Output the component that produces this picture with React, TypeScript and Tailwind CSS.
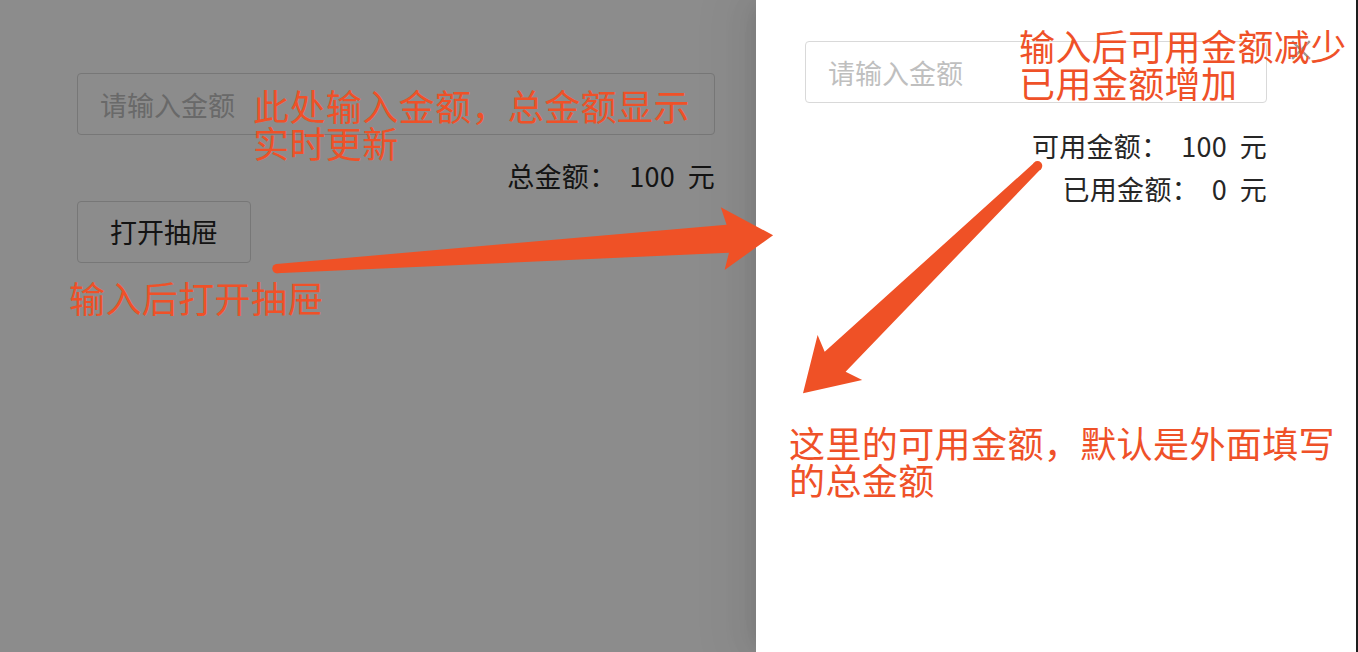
const cjk = "font-['Noto_Sans_CJK_SC','Liberation_Sans',sans-serif]";

function AmountInput({ width }: { width: string }) {
  return (
    <input
      readOnly
      placeholder="请输入金额"
      className={`${width} h-[62px] rounded-[4px] border border-[#d9d9d9] bg-white px-[22px] text-[27px] text-[#262626] outline-none placeholder:text-[#bfbfbf]`}
    />
  );
}

function Note({ className, children }: { className: string; children: React.ReactNode }) {
  return (
    <div className={`absolute z-40 text-[36px] leading-[37px] tracking-[0.4px] text-[#ef5128] ${className}`}>
      {children}
    </div>
  );
}

export default function App() {
  return (
    <div className={`relative flex h-[652px] w-full overflow-hidden bg-white ${cjk}`}>
      <div className="relative flex-1">
        {/* page under the drawer */}
        <div className="ml-[77px] flex w-[638px] flex-col pt-[73px]">
          <AmountInput width="w-[638px]" />
          <div className="mt-[21px] text-right text-[27px] leading-[40px] tracking-[0.3px] text-[#262626]">
            总金额：&nbsp;&nbsp;100&nbsp;&nbsp;元
          </div>
          <button className="mt-[5px] h-[62px] w-[174px] rounded-[4px] border border-[#d9d9d9] bg-white text-[27px] text-[#262626]">
            打开抽屉
          </button>
        </div>

        {/* mask */}
        <div className="absolute inset-0 z-10 bg-black/45" />

        {/* drawer */}
        <aside className="absolute right-0 top-0 bottom-0 z-20 w-[600px] bg-white pl-[49px] pt-[41px] shadow-[-6px_0_16px_-8px_rgba(0,0,0,0.08),-9px_0_28px_0_rgba(0,0,0,0.05),-12px_0_48px_16px_rgba(0,0,0,0.03)]">
          <button className="absolute right-[44px] top-[39px] z-10">
            <svg width="22" height="22" viewBox="0 0 22 22" fill="none" stroke="#9a9a9a" strokeWidth="2.4" strokeLinecap="square">
              <path d="M3 3 L19 19 M19 3 L3 19" />
            </svg>
          </button>
          <div className="flex w-[462px] flex-col">
            <AmountInput width="w-[462px]" />
            <div className="mt-[21px] text-right text-[27px] leading-[43px] tracking-[0.3px] text-[#262626]">
              <div>可用金额：&nbsp;&nbsp;100&nbsp;&nbsp;元</div>
              <div>已用金额：&nbsp;&nbsp;0&nbsp;&nbsp;元</div>
            </div>
          </div>
        </aside>
      </div>
      <div className="w-[2px] bg-[#1f1f1f]" />

      {/* notes */}
      <Note className="left-[253px] top-[87px]">
        此处输入金额，总金额显示
        <br />
        实时更新
      </Note>
      <Note className="left-[69px] top-[279px]">输入后打开抽屉</Note>
      <Note className="left-[1019px] top-[27px]">
        输入后可用金额减少
        <br />
        已用金额增加
      </Note>
      <Note className="left-[789px] top-[424px]">
        这里的可用金额，默认是外面填写
        <br />
        的总金额
      </Note>

      <svg className="pointer-events-none absolute inset-0 z-30" width="1358" height="652" viewBox="0 0 1358 652">
        <g fill="#ef5126">
          <path d="M276.5 264 L726.6 224.7 L720.8 207.3 L773.1 235.3 L724.6 270 L729 252.7 L276.5 273.3 Z" />
          <circle cx="277" cy="268.6" r="4.7" />
          <path d="M1033.6 163.3 L824.7 351.7 L817.6 335 L803 393.3 L862.2 380 L845.6 371.7 L1041.5 168.3 Z" />
          <circle cx="1037.5" cy="165.8" r="4.8" />
        </g>
      </svg>
    </div>
  );
}
